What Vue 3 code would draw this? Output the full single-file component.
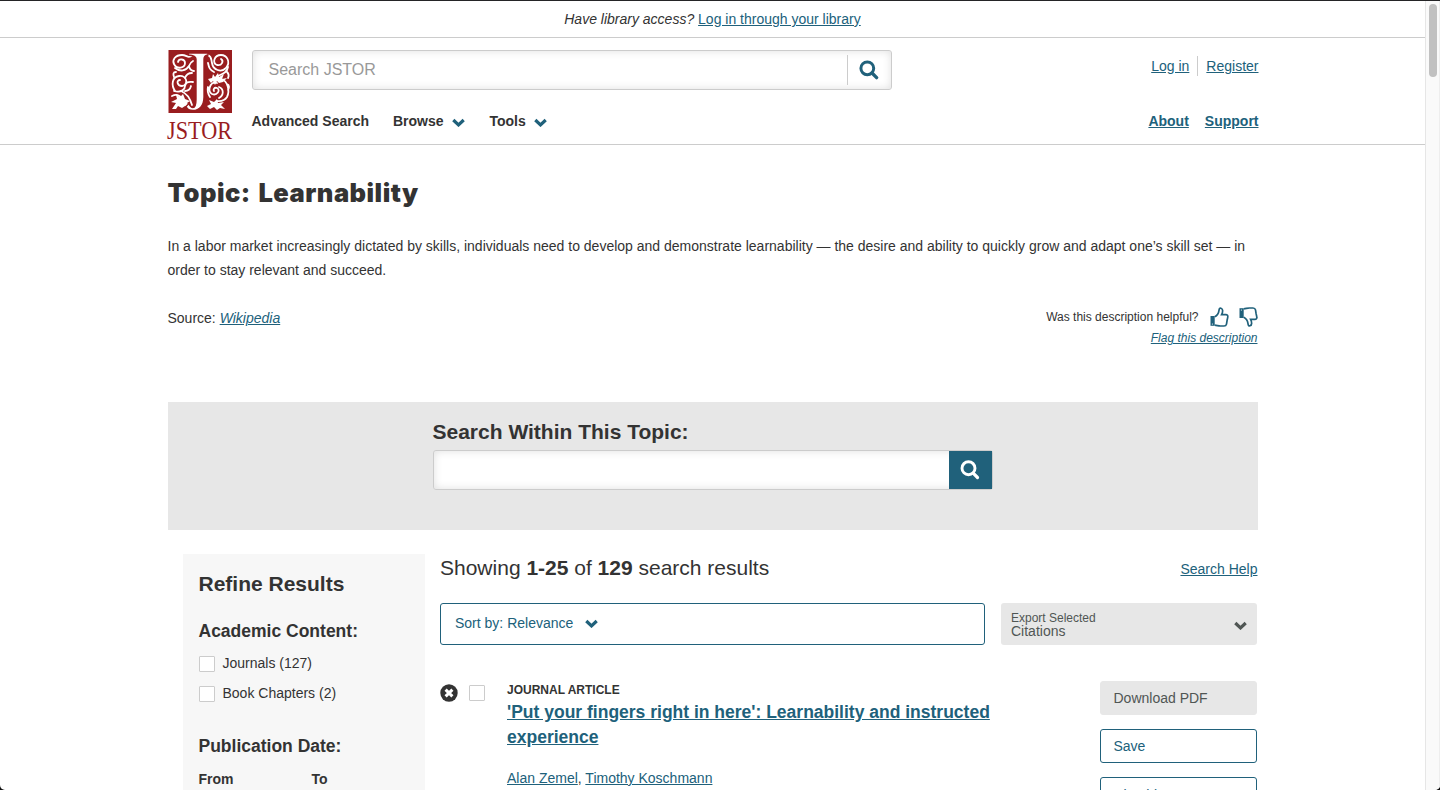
<script setup>
const filters = ['Journals (127)', 'Book Chapters (2)']
const authors = ['Alan Zemel', 'Timothy Koschmann']
const chevron = 'M1.3 2 6.500 6.900 11.700 2'
</script>

<template>
  <div class="window">
    <div class="page">
      <div class="access"><em>Have library access?</em> <a>Log in through your library</a></div>

      <header class="header">
        <div class="container head-row">
          <svg class="logo" width="66" height="94" viewBox="0 0 66 94">
            <rect x="1.5" width="63.500" height="63" fill="#991d1f" />
            <g fill="none" stroke="#fff" stroke-width="1.800" stroke-linecap="round">
              <path d="M25 5.500C21 9 20 5 15 5 8 5 5 10 7 14c3 6 11 4 11-1 0-4-6-5-7-1" />
              <path d="M26 11c-2 1-3 2-4 5-3 5-9 6-14 2M22 16c1 4 3 5 5 5" />
              <path d="M8 41c-4-6-3-14 4-15 8-1 10 9 3 10-5 0-6-6-2-6" />
              <path d="M7 41c8 2 11-2 11-5 1-5 4-4 8-4M18 28c1-3 3-5 7-5M9 22c-3 0-3 2-2 5" />
              <path d="M14 41c5 2 9 7 11 14M5 46c4-2 6-1 9 1M24 36c-1 4-3 5-6 5" />
              <path d="M41 5c4 2 3 4 4 8 1 7 9 10 14 5 5-6 1-13-5-13-7 0-9 8-4 10 5 1 7-4 4-6" />
              <path d="M61 17c-1 6-6 7-10 9M41 13c1 5 2 7 6 9M60 22c2 2 2 4 1 6" />
              <path d="M54 29c7 2 9 12 6 18-3 5-8 4-10 4M60 34c3 1 2 4 1 6" />
              <path d="M50 33c-7-2-10 8-5 11 5 2 9-4 5-6-3-1-4 2-3 3M52 37c5 2 5 8 0 11M41 37c-1 4 0 7 2 10" />
            </g>
            <g fill="#fff">
              <path d="M5 59l4-6-5-1 6-3-1-4 4 2 3-3 2 5 5 2-3 2 4 4-6-1-3 2-4-2-2 3z" />
              <path d="M41 29l4-1 1-4 2 3 3-4 1 4 5-3-2 5 5-1-4 4-4 1-2-2-2 4-2-4-2 2z" />
              <path d="M40 56l4-2-2-4 5 2 3-3 1 4 6-1-3 3 4 4-5-1-3 2-3-3-4 2z" />
            </g>
            <path d="M21.500 3H41v2c-3 .5-4 1.500-4 4v38c0 9-5 13.500-11 13.500-3.500 0-6-1.500-7-4l3-3c1 3 2.500 4 4 4 2 0 3-3 3-8V9c0-2.500-2.500-3.500-7.500-4z" fill="#fff" stroke="#991d1f" stroke-width="1.400" />
            <text class="wordmark" x="0" y="88.800" textLength="65" lengthAdjust="spacingAndGlyphs">JSTOR</text>
          </svg>

          <div class="head-main">
            <div class="field main-search">
              <span class="placeholder">Search JSTOR</span>
              <span class="go">
                <svg width="20" height="20" viewBox="0 0 20 20"><circle cx="8.300" cy="8.300" r="6.400" fill="none" stroke="#20617b" stroke-width="3" /><path d="M13 13l4.600 4.600" stroke="#20617b" stroke-width="3.400" stroke-linecap="round" /></svg>
              </span>
            </div>
            <nav class="nav">
              <span class="adv">Advanced Search</span>
              <span class="browse">Browse<svg width="13" height="9" viewBox="0 0 13 9"><path :d="chevron" /></svg></span>
              <span class="tools">Tools<svg width="13" height="9" viewBox="0 0 13 9"><path :d="chevron" /></svg></span>
            </nav>
          </div>

          <div class="head-side">
            <div class="account"><a>Log in</a><i></i><a>Register</a></div>
            <div class="help"><a class="about">About</a><a class="support">Support</a></div>
          </div>
        </div>
      </header>

      <main class="container">
        <h1>Topic: Learnability</h1>
        <p class="description"><span class="line one">In a labor market increasingly dictated by skills, individuals need to develop and demonstrate learnability — the desire and ability to quickly grow and adapt one’s skill set — in</span> <span class="line two">order to stay relevant and succeed.</span></p>

        <div class="source-row">
          <div class="source">Source: <a>Wikipedia</a></div>
          <div class="feedback">
            <div class="helpful">
              <span>Was this description helpful?</span>
              <svg class="thumb" width="19" height="20" viewBox="0 0 19 20"><path d="M.5 9h4.200v9.800H.5z" class="cuff" /><path d="M4.700 9.800C7.500 8.500 8.700 5.800 9 3.400 9.200 1.500 10 .9 11 1.200c2.200.7 2 3.700.6 6.400h4.200c1.500 0 2.200 1 2 2.200-.1 1.400-.5 2.500-.7 3.500l-.6 3.800c-.3 1.300-1 1.900-2.500 1.900h-3.600c-2.200 0-3.400-.8-5.700-.9" /><circle cx="2.400" cy="17" r=".6" class="dot" /></svg>
              <svg class="thumb down" width="19" height="20" viewBox="0 0 19 20"><path d="M.5 1.200h4.200V11H.5z" class="cuff" /><path d="M4.700 10.200c2.800 1.300 4 4 4.300 6.400.2 1.900 1 2.500 2 2.200 2.200-.7 2-3.700.6-6.400h4.200c1.500 0 2.200-1 2-2.200-.1-1.400-.5-2.500-.7-3.500l-.6-3.800C16.200 1.600 15.500 1 14 1h-3.600c-2.200 0-3.400.8-5.700.9" /><circle cx="2.400" cy="3" r=".6" class="dot" /></svg>
            </div>
            <a class="flag">Flag this description</a>
          </div>
        </div>

        <section class="within">
          <div class="within-box">
            <h2>Search Within This Topic:</h2>
            <div class="field">
              <span class="go solid">
                <svg width="20" height="20" viewBox="0 0 20 20"><circle cx="8.500" cy="8.200" r="6.500" fill="none" stroke="#fff" stroke-width="2.900" /><path d="M13.200 13.200l4.300 4.300" stroke="#fff" stroke-width="3.200" stroke-linecap="round" /></svg>
              </span>
            </div>
          </div>
        </section>

        <div class="columns">
          <aside class="refine">
            <h2>Refine Results</h2>
            <h3 class="academic">Academic Content:</h3>
            <label v-for="f in filters" :key="f"><i class="box"></i>{{ f }}</label>
            <h3 class="published">Publication Date:</h3>
            <div class="range"><b>From</b><b>To</b></div>
          </aside>

          <section class="results">
            <div class="summary">
              <span class="count">Showing <b>1-25</b> of <b>129</b> search results</span>
              <a class="search-help">Search Help</a>
            </div>
            <div class="tools-row">
              <div class="sort"><span>Sort by: Relevance</span><svg width="13" height="9" viewBox="0 0 13 9"><path :d="chevron" /></svg></div>
              <div class="export">
                <div><span class="small">Export Selected</span><span class="cit">Citations</span></div>
                <svg width="13" height="9" viewBox="0 0 13 9"><path :d="chevron" /></svg>
              </div>
            </div>
            <article class="item">
              <svg class="denied" width="18" height="18" viewBox="0 0 18 18"><circle cx="9" cy="9" r="8.700" fill="#333" /><path d="M5.600 5.600l6.800 6.800M12.400 5.600l-6.800 6.800" stroke="#fff" stroke-width="3" /></svg>
              <i class="box"></i>
              <div class="info">
                <div class="kind">JOURNAL ARTICLE</div>
                <a class="title">'Put your fingers right in here': Learnability and instructed experience</a>
                <div class="authors"><template v-for="(a, n) in authors" :key="a"><template v-if="n">, </template><a>{{ a }}</a></template></div>
              </div>
              <div class="actions">
                <span class="button off">Download PDF</span>
                <span class="button">Save</span>
                <span class="button cite">Cite this Item</span>
              </div>
            </article>
          </section>
        </div>
      </main>
    </div>
    <div class="scrollbar"><i></i></div>
  </div>
</template>

<style>
body { background: #111; overflow: hidden; }
</style>

<style scoped>
* { box-sizing: border-box; }
.window { display: flex; height: 790px; border-top: 1px solid #242426; border-radius: 0 0 5px 5px; overflow: hidden; background: #fff; font: 14px/24px "Liberation Sans", Arial, sans-serif; color: #333; }
.page { width: 1425px; height: 789px; overflow: hidden; flex: none; }
.scrollbar { width: 15px; height: 789px; background: #fafafa; border-left: 1px solid #e6e6e6; border-right: 1px solid #eee; padding: 3px; }
.scrollbar i { display: block; width: 8px; height: 73px; border-radius: 4px; background: #c1c1c1; }
a { color: #20617b; text-decoration: underline; text-underline-offset: 1px; }
h1, h2, h3, p { margin: 0; }
svg { flex: none; }
.container { width: 1090px; margin-left: 167.5px; }
.access { height: 37px; border-bottom: 1px solid #ccc; text-align: center; line-height: 37px; }
.header { height: 107px; border-bottom: 1px solid #ccc; }
.head-row { display: flex; padding-top: 12px; }
.logo { margin-left: -1px; margin-right: 19px; overflow: visible; }
.wordmark { font: 25px "Liberation Serif", serif; fill: #991d1f; }
.head-main { width: 640px; }
.field { display: flex; height: 40px; border: 1px solid #ccc; border-radius: 3px; background: #fff; box-shadow: inset 0 0 8px rgba(0, 0, 0, .13); align-items: center; }
.placeholder { padding-left: 16px; font-size: 16px; color: #999; }
.go { margin-left: auto; width: 44px; height: 30px; border-left: 1px solid #ccc; display: flex; align-items: center; justify-content: center; }
.nav { display: flex; margin-top: 19px; font-weight: bold; white-space: nowrap; }
.nav svg { margin-left: 8.5px; position: relative; top: .5px; }
.adv { width: 141.5px; }
.browse { width: 96.5px; }
svg path[d^="M1.3 2"] { fill: none; stroke: #20617b; stroke-width: 3.200; }
.head-side { margin-left: auto; margin-right: -1px; text-align: right; }
.account { display: flex; justify-content: flex-end; margin-top: 4px; }
.account i { width: 1px; height: 20px; background: #ccc; margin: 2px 8px 0; }
.help { display: flex; justify-content: flex-end; margin-top: 31px; font-weight: bold; gap: 16px; }
h1 { margin-top: 32px; font: 900 25.5px/32px Inter, "Liberation Sans", sans-serif; letter-spacing: .5px; word-spacing: 2px; white-space: nowrap; }
.description { margin-top: 25px; }
.line { display: block; white-space: nowrap; }
.source-row { display: flex; justify-content: space-between; margin-top: 24px; height: 96px; }
.source a { font-style: italic; }
.feedback { text-align: right; font-size: 12px; }
.helpful { display: flex; line-height: 20px; margin-top: 1px; margin-right: -.5px; }
.thumb { margin-left: 11px; fill: none; stroke: #20617b; stroke-width: 1.700; }
.thumb.down { margin-left: 10.5px; }
.thumb .cuff { fill: #20617b; stroke: none; }
.thumb .dot { fill: #fff; stroke: none; }
.flag { display: block; font-style: italic; line-height: 20px; margin-top: 1px; }
.within { height: 128px; background: #e7e7e7; }
.within-box { width: 560px; margin-left: 265px; padding-top: 18px; }
.within h2 { font-size: 21px; line-height: 24px; margin-bottom: 6px; }
.go.solid { width: 43px; height: 38px; background: #20617b; border: 0; }
.columns { display: flex; padding-top: 24px; }
.refine { width: 242px; height: 236px; margin-left: 15px; padding: 18px 16px 0; background: #f7f7f7; flex: none; }
.refine h2 { font-size: 21px; }
.refine h3 { font-size: 17.5px; }
.academic { margin-top: 23px; }
.refine label { display: flex; align-items: center; height: 30px; }
.academic + label { margin-top: 5px; }
.box { width: 16px; height: 16px; background: #fff; border: 1px solid #ccc; border-radius: 1px; flex: none; }
.refine .box { margin-right: 8px; margin-top: 1.5px; }
.published { margin-top: 26px; }
.range { display: flex; margin-top: 9px; }
.range b { width: 113px; flex: none; }
.results { width: 817.5px; margin-left: 15.5px; flex: none; }
.summary { display: flex; justify-content: space-between; height: 49px; }
.count { font-size: 21px; line-height: 28px; }
.search-help { line-height: 30px; }
.tools-row { display: flex; gap: 16px; }
.sort { width: 545px; height: 42px; border: 1px solid #20617b; border-radius: 3px; padding-left: 14px; color: #20617b; line-height: 39px; }
.sort svg { margin-left: 12px; }
.export { width: 256px; height: 42px; background: #e7e7e7; border-radius: 3px; display: flex; justify-content: space-between; padding: 9px 10px; color: #505654; line-height: 13px; }
.export span { display: block; }
.export .small { font-size: 12px; }
.export svg { margin-top: 9px; }
.export svg path { stroke: #505654; }
.item { display: flex; margin-top: 36px; }
.denied { margin-top: 3px; margin-right: 11px; }
.item > .box { margin-top: 4px; margin-right: 22px; }
.info { width: 520px; }
.kind { font-size: 12px; line-height: 18px; font-weight: bold; }
.title { display: block; font-weight: bold; font-size: 17.5px; line-height: 25px; width: 500px; margin-top: 1px; }
.authors { margin-top: 16px; }
.actions { width: 157px; margin-left: auto; margin-right: .5px; }
.button { display: block; height: 34px; line-height: 32px; padding-left: 12.5px; border: 1px solid #20617b; border-radius: 3px; margin-bottom: 14px; color: #20617b; }
.button.cite { line-height: 34px; }
.button.off { background: #e7e7e7; border-color: #e7e7e7; color: #505654; }
</style>
